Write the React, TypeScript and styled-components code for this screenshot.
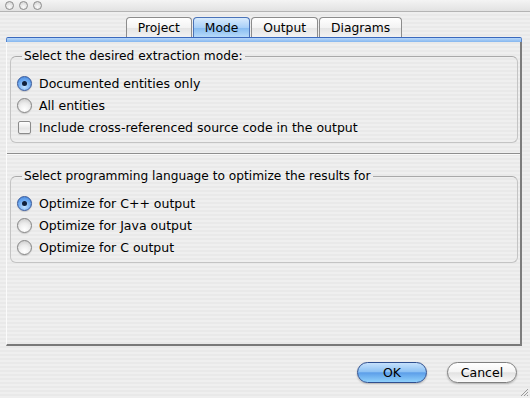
import React from "react";
import styled, { createGlobalStyle } from "styled-components";

const Global = createGlobalStyle`
  html, body { margin: 0; padding: 0; }
  body {
    font-family: "DejaVu Sans", "Liberation Sans", sans-serif;
    font-size: 12px;
    color: #000;
    background: #ececec;
  }
`;

const Window = styled.div`
  position: relative;
  width: 530px;
  height: 398px;
  display: flex;
  flex-direction: column;
  overflow: hidden;
  background: repeating-linear-gradient(
    to bottom,
    #efefef 0px,
    #efefef 2px,
    #e9e9e9 2px,
    #e9e9e9 4px
  );
`;

const TitleBar = styled.div`
  height: 11px;
  flex: none;
  display: flex;
  align-items: center;
  gap: 5px;
  padding-left: 5px;
  border-bottom: 1px solid #b4b4b4;
  background: linear-gradient(to bottom, #f4f4f4, #e2e2e2);
`;

const Light = styled.span`
  width: 7px;
  height: 7px;
  border-radius: 50%;
  border: 1px solid #8d8d8d;
  background: radial-gradient(circle at 50% 70%, #fafafa, #cfcfcf);
`;

const TabBar = styled.div`
  display: flex;
  justify-content: center;
  gap: 1px;
  margin-top: 5px;
  margin-left: 6px;
  margin-right: 8px;
  height: 20px;
  flex: none;
`;

const Tab = styled.div<{ $active?: boolean }>`
  box-sizing: border-box;
  height: 20px;
  padding: 0 11px;
  display: flex;
  align-items: center;
  font-size: 12.3px;
  border: 1px solid ${(p) => (p.$active ? "#4a73b8" : "#8c8c8c")};
  border-bottom: none;
  border-radius: 4px 4px 0 0;
  line-height: 18px;
  background: ${(p) =>
    p.$active
      ? "linear-gradient(to bottom, #d9ebfd 0%, #a9d0f8 50%, #85bbf1 51%, #b7daf9 100%)"
      : "linear-gradient(to bottom, #ffffff 0%, #f3f3f3 50%, #e4e4e4 51%, #f2f2f2 100%)"};
`;

const Pane = styled.div`
  margin: 0 8px 0 6px;
  display: flex;
  flex-direction: column;
  flex: none;
`;

const BlueBar = styled.div`
  height: 4px;
  border-top: 1px solid #3a69bd;
  border-left: 1px solid #5a86cc;
  border-right: 1px solid #5a86cc;
  border-radius: 2px 2px 0 0;
  background: linear-gradient(to bottom, #b9d8fa, #86b7ef);
`;

const PaneBody = styled.div`
  height: 304px;
  display: flex;
  flex-direction: column;
  padding-top: 7px;
  box-sizing: border-box;
  border-left: 1px solid #fbfbfb;
  border-right: 2px solid #7d7d7d;
  border-bottom: 2px solid #7a7a7a;
`;

const Group = styled.fieldset`
  margin: 0 2px 0 3px;
  padding: 9px 0 4px 6px;
  border: 1px solid #c4c4c4;
  border-top-color: #a9a9a9;
  border-radius: 6px;
  display: flex;
  flex-direction: column;
  min-width: 0;
  font-size: 12.5px;
`;

const Legend = styled.legend`
  margin-left: 5px;
  padding: 0 2px;
  line-height: 14px;
  font-size: 12.2px;
`;

const Row = styled.label`
  height: 22px;
  display: flex;
  align-items: center;
  gap: 7px;
`;

const Radio = styled.span<{ $on?: boolean }>`
  box-sizing: border-box;
  width: 15px;
  height: 15px;
  border-radius: 50%;
  flex: none;
  display: flex;
  align-items: center;
  justify-content: center;
  border: 1px solid ${(p) => (p.$on ? "#35579a" : "#858585")};
  background: ${(p) =>
    p.$on
      ? "radial-gradient(circle at 50% 75%, #bfe0ff 0%, #6eaaf0 55%, #3d7fd8 100%)"
      : "radial-gradient(circle at 50% 80%, #ffffff 0%, #ececec 50%, #c4c4c4 100%)"};
  box-shadow: 0 1px 1px rgba(0, 0, 0, 0.15);
  &::after {
    content: "";
    display: ${(p) => (p.$on ? "block" : "none")};
    width: 5px;
    height: 5px;
    border-radius: 50%;
    background: #10203a;
  }
`;

const Check = styled.span`
  box-sizing: border-box;
  width: 13px;
  height: 13px;
  margin: 0 1px;
  border-radius: 2px;
  flex: none;
  border: 1px solid #8a8a8a;
  background: linear-gradient(to bottom, #ffffff, #e6e6e6 60%, #f4f4f4);
  box-shadow: 0 1px 1px rgba(0, 0, 0, 0.12);
`;

const Separator = styled.div`
  height: 1px;
  margin: 10px 0 14px 0;
  background: #8e8e8e;
  border-bottom: 1px solid #fafafa;
`;

const ButtonRow = styled.div`
  display: flex;
  justify-content: flex-end;
  gap: 20px;
  margin-top: 16px;
  padding-right: 13px;
`;

const Button = styled.div<{ $default?: boolean }>`
  box-sizing: border-box;
  width: 70px;
  height: 21px;
  border-radius: 11px;
  display: flex;
  align-items: center;
  justify-content: center;
  font-size: 12.5px;
  border: 1px solid ${(p) => (p.$default ? "#2f4f8f" : "#7f7f7f")};
  background: ${(p) =>
    p.$default
      ? "linear-gradient(to bottom, #c5e1fc 0%, #8ec2f4 45%, #5d9fe9 52%, #8fd0fb 100%)"
      : "linear-gradient(to bottom, #ffffff 0%, #f5f5f5 45%, #e2e2e2 52%, #fafafa 100%)"};
  box-shadow: 0 1px 2px rgba(0, 0, 0, 0.25);
`;

const Grip = styled.svg`
  position: absolute;
  right: 1px;
  bottom: 1px;
`;

export default function App() {
  return (
    <>
      <Global />
      <Window>
        <TitleBar>
          <Light />
          <Light />
          <Light />
        </TitleBar>
        <TabBar>
          <Tab>Project</Tab>
          <Tab $active>Mode</Tab>
          <Tab>Output</Tab>
          <Tab>Diagrams</Tab>
        </TabBar>
        <Pane>
          <BlueBar />
          <PaneBody>
            <Group>
              <Legend>Select the desired extraction mode:</Legend>
              <Row>
                <Radio $on />
                Documented entities only
              </Row>
              <Row>
                <Radio />
                All entities
              </Row>
              <Row>
                <Check />
                Include cross-referenced source code in the output
              </Row>
            </Group>
            <Separator />
            <Group>
              <Legend>Select programming language to optimize the results for</Legend>
              <Row>
                <Radio $on />
                Optimize for C++ output
              </Row>
              <Row>
                <Radio />
                Optimize for Java output
              </Row>
              <Row>
                <Radio />
                Optimize for C output
              </Row>
            </Group>
          </PaneBody>
        </Pane>
        <ButtonRow>
          <Button $default>OK</Button>
          <Button>Cancel</Button>
        </ButtonRow>
        <Grip width="10" height="10" viewBox="0 0 10 10">
          <path d="M9 2 L2 9 M9 5 L5 9 M9 8 L8 9" stroke="#9a9a9a" strokeWidth="1" fill="none" />
        </Grip>
      </Window>
    </>
  );
}
